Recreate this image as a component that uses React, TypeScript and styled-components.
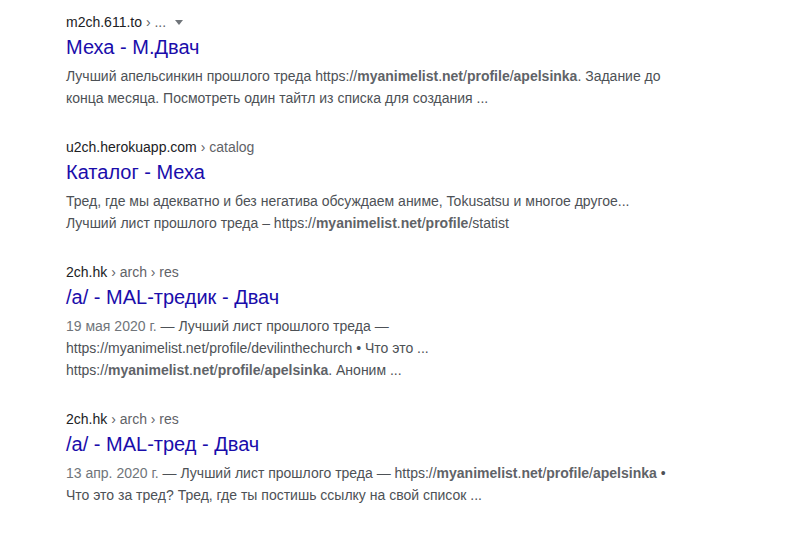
import React from "react";
import styled, { createGlobalStyle } from "styled-components";

const GlobalStyle = createGlobalStyle`
  body {
    margin: 0;
    background: #fff;
    font-family: "Liberation Sans", Arial, sans-serif;
  }
`;

const Page = styled.div`
  padding: 11px 0 0 66px;
  width: 600px;
`;

const Result = styled.div`
  margin-bottom: 27px;
`;

const UrlLine = styled.div`
  display: flex;
  align-items: center;
  font-size: 14px;
  line-height: 22px;
  color: #202124;
  white-space: nowrap;
`;

const Crumbs = styled.span`
  color: #5f6368;
`;

const MenuArrow = styled.span`
  display: inline-block;
  margin-left: 9px;
  margin-top: 1px;
  border-style: solid;
  border-width: 5px 4px 0 4px;
  border-color: #70757a transparent transparent transparent;
`;

const Title = styled.a`
  display: block;
  margin: 1px 0 5px;
  font-size: 20px;
  line-height: 26px;
  color: #1a0dab;
  text-decoration: none;
  white-space: nowrap;
`;

const Snippet = styled.div`
  font-size: 14px;
  line-height: 22px;
  color: #4d5156;
`;

const Line = styled.div`
  white-space: nowrap;
`;

const Date = styled.span`
  color: #70757a;
`;

const Em = styled.b`
  color: #5f6368;
  font-weight: bold;
`;

type ResultData = {
  domain: string;
  crumbs: string;
  menu?: boolean;
  title: string;
  lines: React.ReactNode[];
};

const results: ResultData[] = [
  {
    domain: "m2ch.611.to",
    crumbs: " › ...",
    menu: true,
    title: "Меха - М.Двач",
    lines: [
      <>
        Лучший апельсинкин прошлого треда https://
        <Em>myanimelist</Em>.<Em>net</Em>/<Em>profile</Em>/<Em>apelsinka</Em>.
        Задание до
      </>,
      "конца месяца. Посмотреть один тайтл из списка для создания ...",
    ],
  },
  {
    domain: "u2ch.herokuapp.com",
    crumbs: " › catalog",
    title: "Каталог - Меха",
    lines: [
      "Тред, где мы адекватно и без негатива обсуждаем аниме, Tokusatsu и многое другое...",
      <>
        Лучший лист прошлого треда – https://<Em>myanimelist</Em>.<Em>net</Em>/
        <Em>profile</Em>/statist
      </>,
    ],
  },
  {
    domain: "2ch.hk",
    crumbs: " › arch › res",
    title: "/a/ - MAL-тредик - Двач",
    lines: [
      <>
        <Date>19 мая 2020 г.</Date> — Лучший лист прошлого треда —
      </>,
      "https://myanimelist.net/profile/devilinthechurch • Что это ...",
      <>
        https://<Em>myanimelist</Em>.<Em>net</Em>/<Em>profile</Em>/<Em>apelsinka</Em>.
        Аноним ...
      </>,
    ],
  },
  {
    domain: "2ch.hk",
    crumbs: " › arch › res",
    title: "/a/ - MAL-тред - Двач",
    lines: [
      <>
        <Date>13 апр. 2020 г.</Date> — Лучший лист прошлого треда — https://
        <Em>myanimelist</Em>.<Em>net</Em>/<Em>profile</Em>/<Em>apelsinka</Em> •
      </>,
      "Что это за тред? Тред, где ты постишь ссылку на свой список ...",
    ],
  },
];

const App = () => {
  return (
    <>
      <GlobalStyle />
      <Page>
        {results.map((r, index) => (
          <Result key={index}>
            <UrlLine>
              {r.domain}
              <Crumbs>&nbsp;{r.crumbs.trim()}</Crumbs>
              {r.menu && <MenuArrow />}
            </UrlLine>
            <Title href="#">{r.title}</Title>
            <Snippet>
              {r.lines.map((line, i) => (
                <Line key={i}>{line}</Line>
              ))}
            </Snippet>
          </Result>
        ))}
      </Page>
    </>
  );
};

export default App;
